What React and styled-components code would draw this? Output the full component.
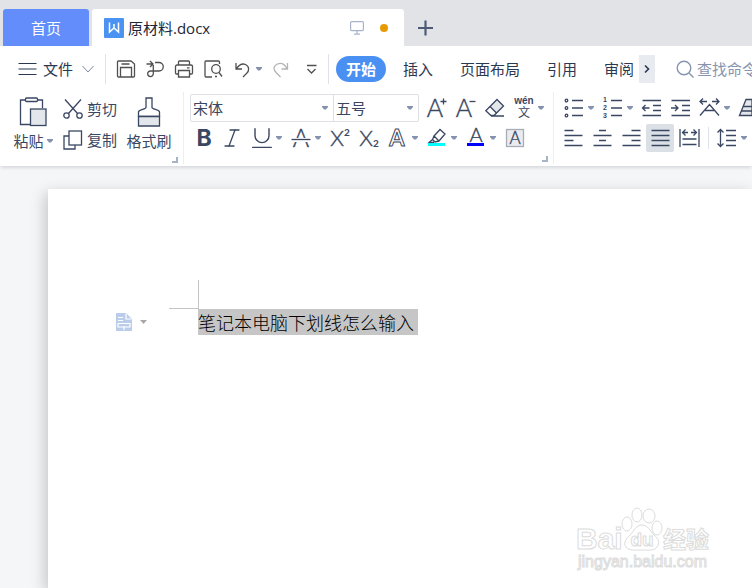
import React from 'react';
import styled, { createGlobalStyle } from 'styled-components';
import { Italic, Underline } from 'lucide-react';

const Icon = ({ w = 20, h = 20, sw = 1, children }) => (
  <svg
    width={w}
    height={h}
    viewBox={`0 0 ${w} ${h}`}
    fill="none"
    stroke="currentColor"
    strokeWidth={sw}
    aria-hidden="true"
  >
    {children}
  </svg>
);

const Letter = ({ size = 20, family = 'Lato, sans-serif', weight = 400, children, ...rest }) => (
  <text
    fontSize={size}
    fontFamily={family}
    fontWeight={weight}
    textAnchor="middle"
    fill="currentColor"
    stroke="none"
    {...rest}
  >
    {children}
  </text>
);

const ThinLetter = (props) => (
  <Letter weight={300} stroke="currentColor" strokeWidth="0.4" {...props} />
);

const Caret = () => (
  <svg width="6" height="4" viewBox="0 0 6 4" aria-hidden="true">
    <path d="M0 0h6v1L4 3.5H2L0 1z" fill="#8492b0" />
  </svg>
);

const Tool = ({ label, caret, active, muted, children }) => (
  <ToolButton type="button" aria-label={label} $caret={caret} $active={active} $muted={muted}>
    <Icon sw={1.3}>{children}</Icon>
    {caret && <Caret />}
  </ToolButton>
);

const TitleBar = () => (
  <StyledTitleBar>
    <HomeTab type="button">首页</HomeTab>
    <DocTab type="button">
      <svg width="20" height="20" viewBox="0 0 20 20" aria-hidden="true">
        <rect width="20" height="20" rx="1" fill="#4b93f3" />
        <path d="M5.5 4.5v9.5l4.5-4 4.5 4V4.5M10 10V6" fill="none" stroke="#fff" strokeWidth="1.5" />
      </svg>
      <DocName>原材料.docx</DocName>
      <MonitorMark>
        <Icon w={14} h={14} sw={1.2}>
          <rect x="0.6" y="0.6" width="12.8" height="9" rx="1" />
          <path d="M7 9.6v3.4M4 13.2h6" />
        </Icon>
      </MonitorMark>
      <UnsavedDot />
    </DocTab>
    <NewTab type="button" aria-label="新建">
      <Icon w={16} h={16} sw={2.2}>
        <path d="M8.500 0.500v15M1 8h15" />
      </Icon>
    </NewTab>
  </StyledTitleBar>
);

const MenuBar = () => (
  <StyledMenuBar>
    <FileButton type="button">
      <Icon w={19} h={14} sw={1.2}>
        <path d="M0.5 1.5h18M0.5 7h18M0.5 12.5h18" />
      </Icon>
      <FileLabel>文件</FileLabel>
      <Icon w={12} h={8} sw={1}>
        <path d="M0.5 1l5.5 6 5.5-6" stroke="#7c879c" />
      </Icon>
    </FileButton>
    <Divider />
    <QuickTools>
      <Tool label="保存">
        <path d="M1.500 3a1 1 0 0 1 1-1h12.500l3.500 3V17a1 1 0 0 1-1 1h-15a1 1 0 0 1-1-1z" />
        <path d="M4.500 18V8.500h11V18M5.500 5h8" />
      </Tool>
      <Tool label="输出为PDF">
        <path d="M1.500 5h6M5 2l3 3-3 3M10 3.500h4a4 4 0 0 1 0 8.500H5.500a2.800 2.800 0 1 0 2.800 2.800V6" />
      </Tool>
      <Tool label="打印">
        <path d="M4.500 6V3a1 1 0 0 1 1-1h9a1 1 0 0 1 1 1v3M5 15H2.500a1 1 0 0 1-1-1V7.500a1.500 1.500 0 0 1 1.500-1.500h14a1.500 1.500 0 0 1 1.500 1.500V14a1 1 0 0 1-1 1h-2" />
        <path d="M4.500 11.500h11V18h-11zM13 8.800h2.500" />
      </Tool>
      <Tool label="打印预览">
        <path d="M9 18H3a1 1 0 0 1-1-1V3a1 1 0 0 1 1-1h12.500a1 1 0 0 1 1 1v2" />
        <circle cx="13" cy="10" r="4.300" />
        <path d="M12 17.500h2M16 13.500l3 4" />
      </Tool>
      <Tool label="撤销" caret>
        <path d="M4 4v6h6M4.500 9.500C7 6 10 4 13.500 5.500c4 2 4 6.500 1 9L11 18" />
      </Tool>
      <Tool label="恢复" muted>
        <path d="M16.500 4v6h-6M16 9.500C13.500 5 10 3.500 6.500 5c-4.500 2-4.500 6-1 9l4 4" />
      </Tool>
      <Tool label="自定义快速访问工具栏">
        <path d="M7 6.500h9.500M7.500 10l4 4 4-4" />
      </Tool>
    </QuickTools>
    <Divider />
    <TabList>
      <MenuTab type="button" $active>开始</MenuTab>
      <MenuTab type="button">插入</MenuTab>
      <MenuTab type="button">页面布局</MenuTab>
      <MenuTab type="button">引用</MenuTab>
      <MenuTab type="button">审阅</MenuTab>
    </TabList>
    <MoreTabs type="button" aria-label="更多选项卡">
      <Icon w={8} h={10} sw={1.6}>
        <path d="M2 1.500l3.500 3.500L2 8.500" />
      </Icon>
    </MoreTabs>
    <SearchBox>
      <Icon w={18} h={18} sw={1.4}>
        <circle cx="8" cy="8" r="6.800" />
        <path d="M13 13l4.500 4.500" />
      </Icon>
      <SearchInput type="text" aria-label="查找命令" placeholder="查找命令" />
    </SearchBox>
  </StyledMenuBar>
);

const Launcher = ({ label }) => (
  <LauncherButton type="button" aria-label={label}>
    <svg width="6" height="6" viewBox="0 0 6 6" aria-hidden="true">
      <path d="M5 0v5H0" fill="none" stroke="#a9b3c6" strokeWidth="2" />
    </svg>
  </LauncherButton>
);

const ClipboardGroup = () => (
  <Group>
    <ClipboardBody>
      <BigButton type="button">
        <Icon w={28} h={30} sw={1.3}>
          <path d="M7 3H1.500v24.500H11M18 3h5.500v8" />
          <rect x="6.500" y="1" width="12" height="3.500" rx="1" />
          <rect x="11.500" y="12" width="15.500" height="16.500" fill="#e3e6eb" />
        </Icon>
        <span>
          粘贴
          <Caret />
        </span>
      </BigButton>
      <SmallColumn>
        <SmallButton type="button">
          <Icon sw={1.3}>
            <path d="M2 0.500l12.500 14M18 0.500l-12.500 14" />
            <circle cx="3.500" cy="16.500" r="2.700" />
            <circle cx="16.500" cy="16.500" r="2.700" />
          </Icon>
          剪切
        </SmallButton>
        <SmallButton type="button">
          <Icon sw={1.3}>
            <path d="M6 6H1v13h11v-4" />
            <rect x="6" y="1" width="12.500" height="14" />
          </Icon>
          复制
        </SmallButton>
      </SmallColumn>
      <BigButton type="button">
        <Icon w={24} h={30} sw={1.3}>
          <path d="M9 1h6v9.500c0 2 7.500 2 7.500 4.500v4.500h-21V15c0-2.500 7.500-2.500 7.500-4.500z" />
          <path d="M1.500 19.500h21V29h-21z" fill="#e3e6eb" />
        </Icon>
        <span>格式刷</span>
      </BigButton>
    </ClipboardBody>
    <Launcher label="剪贴板" />
  </Group>
);

const FontGroup = () => (
  <Group>
    <ToolRow>
      <Combo>
        <ComboField $width="142px">
          <ComboSelect aria-label="字体">
            <option>宋体</option>
          </ComboSelect>
          <Caret />
        </ComboField>
        <ComboField $width="85px">
          <ComboSelect aria-label="字号">
            <option>五号</option>
          </ComboSelect>
          <Caret />
        </ComboField>
      </Combo>
      <Tool label="增大字号">
        <ThinLetter x="8" y="19" size={25}>A</ThinLetter>
        <path d="M13.500 3.500h6M16.500 0.500v6" />
      </Tool>
      <Tool label="减小字号">
        <ThinLetter x="8" y="19" size={25}>A</ThinLetter>
        <path d="M13.500 3.500h6" />
      </Tool>
      <Tool label="清除格式">
        <path d="M12 1.500l6.500 6.500-7 7-6.500-6.500z" fill="#e3e6eb" />
        <path d="M5 8.500L0.800 12.700 6 17.500h3l2.500-2.500M6 18h13" />
      </Tool>
      <Tool label="拼音指南" caret>
        <Letter x="10" y="6" size={10} weight={700} family='"Liberation Sans", sans-serif'>wén</Letter>
        <Letter x="10" y="19" size={12} family='"Liberation Sans", "Noto Sans CJK SC", sans-serif'>文</Letter>
      </Tool>
    </ToolRow>
    <ToolRow>
      <Tool label="加粗">
        <Letter x="10" y="18" size={23} weight={700} family="Inter, sans-serif">B</Letter>
      </Tool>
      <Tool label="倾斜">
        <Italic x="-3" y="-2" size={24} strokeWidth={1.3} />
      </Tool>
      <Tool label="下划线" caret>
        <Underline x="-4" y="-4" size={28} strokeWidth={1.2} />
      </Tool>
      <Tool label="删除线" caret>
        <ThinLetter x="10" y="19" size={25}>A</ThinLetter>
        <path d="M1 12h18" strokeWidth="4" stroke="#fff" />
        <path d="M0.500 11.500h19" />
      </Tool>
      <Tool label="上标">
        <ThinLetter x="7" y="18" size={22}>X</ThinLetter>
        <Letter x="17" y="8" size={10} weight={700}>2</Letter>
      </Tool>
      <Tool label="下标">
        <ThinLetter x="7" y="18" size={22}>X</ThinLetter>
        <Letter x="17" y="19" size={10} weight={700}>2</Letter>
      </Tool>
      <Tool label="文字效果" caret>
        <Letter x="9" y="18" size={22} weight={700} fill="#fff" stroke="currentColor" strokeWidth="1">A</Letter>
      </Tool>
      <Tool label="突出显示" caret>
        <path d="M7 8l6-6.500 5 4.500-6 7zM7 8l-1.500 3.500L8 14l4-1M5.500 11.500L2 14.500h5" />
        <path d="M1 16.500h17" stroke="#00ffff" strokeWidth="3" />
      </Tool>
      <Tool label="字体颜色" caret>
        <ThinLetter x="10" y="14" size={20}>A</ThinLetter>
        <path d="M1 16.500h17" stroke="#0000ff" strokeWidth="3" />
      </Tool>
      <Tool label="字符底纹">
        <rect x="1.500" y="1.500" width="17" height="17" fill="#e9ebee" stroke="#a6adb9" />
        <ThinLetter x="10" y="16" size={17}>A</ThinLetter>
      </Tool>
    </ToolRow>
    <Launcher label="字体" />
  </Group>
);

const numberFont = '"Liberation Sans", sans-serif';

const ParagraphGroup = () => (
  <Group>
    <ToolRow>
      <Tool label="项目符号" caret>
        <path d="M8 2.500h11M8 10h11M8 17.500h11" />
        <circle cx="2.500" cy="2.500" r="1.300" />
        <circle cx="2.500" cy="10" r="1.300" />
        <circle cx="2.500" cy="17.500" r="1.300" />
      </Tool>
      <Tool label="编号" caret>
        <path d="M8 2.500h11M8 10h11M8 17.500h11" />
        <Letter x="2" y="4" size={7} weight={700} family={numberFont}>1</Letter>
        <Letter x="2" y="12" size={7} weight={700} family={numberFont}>2</Letter>
        <Letter x="2" y="20" size={7} weight={700} family={numberFont}>3</Letter>
      </Tool>
      <Tool label="减少缩进量">
        <path d="M0.500 2.500h18.500M11 7.500h8M11 12.500h8M0.500 17.500h18.500M0.500 10h7M3.500 7l-3 3 3 3" />
      </Tool>
      <Tool label="增加缩进量">
        <path d="M0.500 2.500h18.500M11 7.500h8M11 12.500h8M0.500 17.500h18.500M0 10h7M4 7l3 3-3 3" />
      </Tool>
      <Tool label="中文版式" caret>
        <path d="M0 17.500L9.500 6.500 19 17.500M5 12.500h9M0 3.500h7M3 0.500l-3 3 3 3M12 3.500h7M16 0.500l3 3-3 3" />
      </Tool>
      <Tool label="排序">
        <path d="M0.500 17.500L7 1.500h6v16zM4 8.500h9M2.500 13h10" fill="#e3e6eb" />
      </Tool>
    </ToolRow>
    <ToolRow>
      <Tool label="左对齐">
        <path d="M0.500 2.500h9M0.500 7.500h18M0.500 12.500h9M0.500 17.500h18" />
      </Tool>
      <Tool label="居中对齐">
        <path d="M6 2.500h7M0.500 7.500h18M6 12.500h7M0.500 17.500h18" />
      </Tool>
      <Tool label="右对齐">
        <path d="M9.500 2.500h9M0.500 7.500h18M9.500 12.500h9M0.500 17.500h18" />
      </Tool>
      <Tool label="两端对齐" active>
        <path d="M0.500 2.500h18M0.500 7.500h18M0.500 12.500h18M0.500 17.500h18" />
      </Tool>
      <Tool label="分散对齐">
        <path d="M0 1v18M19 1v18M3 4.500h5M5.500 1.500l-3 3 3 3M11 4.500h5M13.500 1.500l3 3-3 3M2.500 11h14M2.500 16.500h14" />
      </Tool>
      <ShortDivider />
      <Tool label="行距" caret>
        <path d="M3.500 1.500v17M0.500 4.500l3-3 3 3M0.500 15.500l3 3 3-3M9 2.500h10M9 7.500h10M9 12.500h10M9 17.500h10" />
      </Tool>
    </ToolRow>
  </Group>
);

const Watermark = () => (
  <StyledWatermark>
    <svg width="136" height="66" viewBox="0 0 136 66" fill="#fff" stroke="#dcdcdc" strokeWidth="1">
      <g fontFamily='"Liberation Sans", "Noto Sans CJK SC", sans-serif' fontWeight="700">
        <text x="0" y="41" fontSize="30">Bai</text>
        <ellipse cx="51" cy="16" rx="5" ry="7" />
        <ellipse cx="61" cy="7" rx="5" ry="7" />
        <ellipse cx="73" cy="8" rx="6" ry="7" />
        <ellipse cx="81" cy="20" rx="5" ry="7" />
        <path d="M66 17c6 0 8 6 12 10 5 4 6 8 3 12s-8 3-15 3-13 1-16-3 0-8 4-12c4-4 6-10 12-10z" />
        <text x="66" y="38" fontSize="19" textAnchor="middle">du</text>
        <text x="87" y="40" fontSize="23">经验</text>
        <text x="2" y="59" fontSize="16" fontWeight="400">jingyan.baidu.com</text>
      </g>
    </svg>
  </StyledWatermark>
);

const Workspace = () => (
  <StyledWorkspace>
    <Page>
      <CropMark />
      <Paragraph>
        <SmartTag type="button" aria-label="段落布局">
          <svg width="16" height="18" viewBox="0 0 16 18" aria-hidden="true">
            <path d="M0 0h10l6 6v12H0z" fill="#b9cdea" />
            <path
              d="M10 0.500v5.500h5.500M2 4.500h5M2 7.500h5M2 10.500h12v3.500H2zM8 13v4"
              fill="none"
              stroke="#fff"
              strokeWidth="1.200"
            />
          </svg>
          <svg width="7" height="4" viewBox="0 0 7 4" aria-hidden="true">
            <path d="M0 0h7L3.500 4z" fill="#a8a8a8" />
          </svg>
        </SmartTag>
        <SelectedText>笔记本电脑下划线怎么输入</SelectedText>
      </Paragraph>
      <Watermark />
    </Page>
  </StyledWorkspace>
);

const App = () => {
  return (
    <>
      <GlobalStyle />
      <Window>
        <TitleBar />
        <MenuBar />
        <Ribbon>
          <ClipboardGroup />
          <FontGroup />
          <ParagraphGroup />
        </Ribbon>
        <Workspace />
      </Window>
    </>
  );
};

const GlobalStyle = createGlobalStyle`
  * {
    box-sizing: border-box;
  }
  body {
    margin: 0;
    color: #2b3852;
    font-family: "Open Sans", "Noto Sans CJK SC", sans-serif;
    font-size: 15px;
    line-height: 20px;
  }
  button, input, select {
    margin: 0;
    padding: 0;
    border: 0;
    background: none;
    color: inherit;
    font: inherit;
    white-space: nowrap;
  }
  svg {
    flex: none;
    overflow: visible;
  }
`;

const Window = styled.div`
  display: flex;
  flex-direction: column;
  min-height: 100vh;
  overflow: hidden;
`;

const StyledTitleBar = styled.header`
  display: flex;
  align-items: stretch;
  gap: 3px;
  height: 46px;
  padding: 9px 3px 0;
  background-color: #e1e3e7;
`;

const HomeTab = styled.button`
  flex: none;
  width: 86px;
  border-radius: 3px 3px 0 0;
  background-color: #628dfb;
  color: #fff;
`;

const DocTab = styled.button`
  display: flex;
  flex: 0 1 312px;
  align-items: center;
  gap: 4px;
  padding: 0 16px 0 12px;
  border-radius: 3px 3px 0 0;
  background-color: #fff;
  color: #1c2536;
`;

const DocName = styled.span`
  flex: 1;
  text-align: left;
`;

const MonitorMark = styled.span`
  display: flex;
  margin-right: 12px;
  color: #a9b4cc;
`;

const UnsavedDot = styled.span`
  width: 8px;
  height: 8px;
  border-radius: 50%;
  background-color: #e89a05;
`;

const NewTab = styled.button`
  display: flex;
  align-items: center;
  padding: 0 10px;
  color: #4d5b78;
`;

const StyledMenuBar = styled.nav`
  display: flex;
  align-items: center;
  height: 46px;
  padding-left: 18px;
  background-color: #fff;
`;

const FileButton = styled.button`
  display: flex;
  flex: none;
  align-items: center;
  margin-right: 11px;
`;

const FileLabel = styled.span`
  margin: 0 9px 0 6px;
`;

const Divider = styled.span`
  flex: none;
  width: 1px;
  height: 30px;
  background-color: #dfe2e8;
`;

const ShortDivider = styled(Divider)`
  height: 22px;
  margin: 0 3px 0 4px;
`;

const QuickTools = styled.div`
  display: flex;
  flex: none;
  padding: 0 4px 0 5px;
  color: #505050;
`;

const ToolButton = styled.button`
  display: flex;
  flex: none;
  align-items: center;
  gap: 4px;
  width: ${({ $caret }) => ($caret ? '38px' : '28px')};
  height: 28px;
  margin-right: 1px;
  padding-left: 5px;
  border-radius: 2px;
  background-color: ${({ $active }) => ($active ? '#dbe0e6' : 'transparent')};
  color: ${({ $muted }) => ($muted ? '#b4b4b4' : 'inherit')};
`;

const TabList = styled.div`
  display: flex;
  flex: none;
  gap: 7px;
  padding-left: 7px;
`;

const MenuTab = styled.button`
  height: 26px;
  padding: 0 10px;
  border-radius: 13px;
  background-color: ${({ $active }) => ($active ? '#4a90f3' : 'transparent')};
  color: ${({ $active }) => ($active ? '#fff' : 'inherit')};
  font-weight: ${({ $active }) => ($active ? 700 : 400)};

  &:last-child {
    padding-right: 5px;
  }
`;

const MoreTabs = styled.button`
  display: flex;
  flex: none;
  align-items: center;
  justify-content: center;
  width: 16px;
  height: 28px;
  background-color: #e8ebef;
`;

const SearchBox = styled.div`
  display: flex;
  flex: 1;
  align-items: center;
  gap: 3px;
  min-width: 0;
  margin-left: 21px;
  color: #8794ae;
`;

const SearchInput = styled.input`
  flex: 1;
  min-width: 0;
  outline: none;

  &::placeholder {
    color: #8794ae;
    opacity: 1;
  }
`;

const Ribbon = styled.section`
  position: relative;
  display: flex;
  height: 74px;
  background-color: #fff;
  box-shadow: 0 3px 3px -1px rgba(40, 50, 70, 0.14);
  color: #3a4762;
`;

const Group = styled.div`
  display: flex;
  flex: none;
  flex-direction: column;
  gap: 2px;
  height: 72px;
  padding: 2px 5px 0;
  border-right: 1px solid #eceef1;

  &:last-child {
    border-right: 0;
  }
`;

const ToolRow = styled.div`
  display: flex;
  align-items: center;
  height: 28px;
`;

const LauncherButton = styled.button`
  display: flex;
  align-self: flex-end;
  margin-top: auto;
  padding-bottom: 2px;
`;

const ClipboardBody = styled.div`
  display: flex;
  gap: 5px;
  padding: 0 4px 0 3px;
`;

const BigButton = styled.button`
  display: flex;
  flex-direction: column;
  align-items: center;
  gap: 4px;
  width: 50px;
  padding-top: 3px;

  span {
    display: flex;
    align-items: center;
    gap: 3px;
  }
`;

const SmallColumn = styled.div`
  display: flex;
  flex-direction: column;
  gap: 1px;
  width: 56px;
`;

const SmallButton = styled.button`
  display: flex;
  align-items: center;
  gap: 4px;
  height: 30px;
`;

const Combo = styled.div`
  display: flex;
  margin: 0 3px 0 1px;
  border: 1px solid #dde1e7;
  border-radius: 2px;
`;

const ComboField = styled.label`
  display: flex;
  align-items: center;
  width: ${({ $width }) => $width};
  height: 26px;
  padding-right: 5px;

  & + & {
    border-left: 1px solid #dde1e7;
  }
`;

const ComboSelect = styled.select`
  flex: 1;
  min-width: 0;
  padding-left: 2px;
  appearance: none;
  outline: none;
`;

const StyledWorkspace = styled.main`
  display: flex;
  flex: 1;
  padding: 23px 0 0 48px;
  background-color: #f5f6f8;
`;

const Page = styled.article`
  position: relative;
  flex: 1;
  padding-top: 91px;
  background-color: #fff;
  box-shadow: -3px 4px 14px rgba(0, 0, 0, 0.2);
`;

const CropMark = styled.div`
  width: 30px;
  height: 29px;
  margin-left: 121px;
  border: solid #c4c4c4;
  border-width: 0 1px 1px 0;
`;

const Paragraph = styled.div`
  display: flex;
  padding-left: 68px;
`;

const SmartTag = styled.button`
  display: flex;
  align-items: center;
  gap: 8px;
  width: 82px;
`;

const SelectedText = styled.p`
  margin: 0;
  padding-right: 4px;
  background-color: #c6c6c6;
  color: #000;
  font-family: "Noto Sans CJK SC", sans-serif;
  font-size: 18px;
  font-weight: 300;
  line-height: 26px;
`;

const StyledWatermark = styled.div`
  position: absolute;
  right: 40px;
  bottom: 10px;
`;

export default App;
